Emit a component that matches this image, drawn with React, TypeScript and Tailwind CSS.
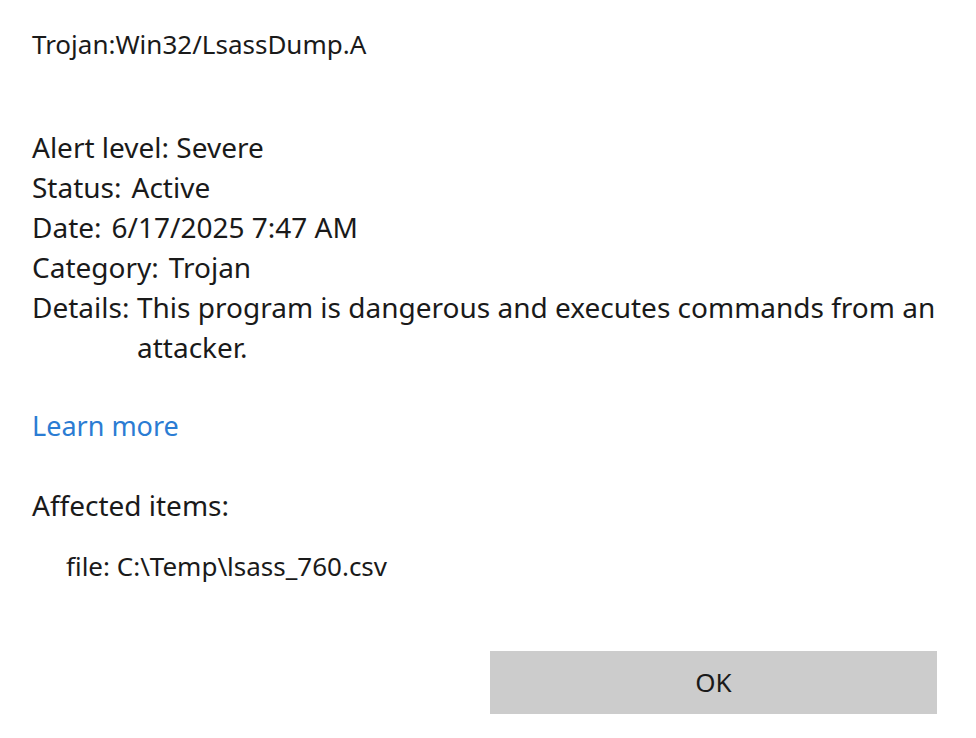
import React from "react";

export default function App() {
  return (
    <div
      className="w-[976px] h-[738px] bg-white text-[#1a1a1a] flex flex-col pl-[32px]"
      style={{ fontFamily: '"Noto Sans", "Open Sans", sans-serif' }}
    >
      <div className="h-[40px] mt-[24px] leading-[40px] text-[26px]">Trojan:Win32/LsassDump.A</div>
      <div className="mt-[63px] text-[28px] leading-[40px] flex flex-col">
        <div>Alert level: Severe</div>
        <div className="flex gap-[10px]"><span>Status:</span><span>Active</span></div>
        <div className="flex gap-[10px]"><span>Date:</span><span>6/17/2025 7:47 AM</span></div>
        <div className="flex gap-[10px]"><span>Category:</span><span>Trojan</span></div>
        <div className="flex">
          <span className="shrink-0 w-[105px]">Details:</span>
          <span className="w-[820px]">This program is dangerous and executes commands from an attacker.</span>
        </div>
      </div>
      <div className="mt-[39px] h-[40px] leading-[40px] text-[27px] text-[#2b7cd3]">Learn more</div>
      <div className="mt-[39px] h-[40px] leading-[40px] text-[28px]">Affected items:</div>
      <div className="mt-[21px] h-[40px] leading-[40px] text-[26px] pl-[34px]">file: C:\Temp\lsass_760.csv</div>
      <div className="mt-[65px] flex pl-[458px]">
        <div className="w-[447px] h-[63px] bg-[#cccccc] flex items-center justify-center text-[26px]">OK</div>
      </div>
    </div>
  );
}
